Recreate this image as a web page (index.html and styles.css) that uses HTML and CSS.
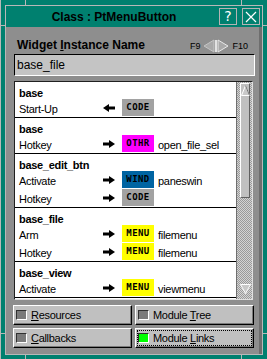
FILE: index.html
```html
<!DOCTYPE html>
<html lang="en">
<head>
  <meta charset="UTF-8">
  <title>Class : PtMenuButton</title>
  <link rel="stylesheet" href="styles.css">
</head>
<body>
  <div class="frame">
    <div class="window">
      <div class="titlebar">
        <span class="title">Class : PtMenuButton</span>
        <span class="tbtn help">?</span>
        <span class="tbtn">
          <svg width="12" height="12" viewBox="0 0 12 12"><path d="M1 1 L11 11 M11 1 L1 11" stroke="#fff" stroke-width="1.2" fill="none"/></svg>
        </span>
      </div>

      <div class="content">
        <div class="name-row">
          <span class="name-label">Widget <u>I</u>nstance Name</span>
          <span class="nav">
            <span>F9</span>
            <svg width="26" height="14" viewBox="0 0 26 14">
              <polygon points="11,1 1,7 11,13" fill="#a9a9a9" stroke="#c4c4c4"/>
              <line x1="13" y1="1" x2="13" y2="13" stroke="#fff" stroke-width="1.5"/>
              <polygon points="15,1 25,7 15,13" fill="#a9a9a9" stroke="#e8e8e8"/>
            </svg>
            <span>F10</span>
          </span>
        </div>

        <div class="field">base_file</div>

        <div class="listbox">
          <div class="items">
            <div class="group">
              <div class="gname">base</div>
              <div class="row">
                <span class="event">Start-Up</span>
                <svg class="arrow" width="12" height="8" viewBox="0 0 12 8"><polygon points="12,2.5 6,2.5 6,0 0,4 6,8 6,5.5 12,5.5"/></svg>
                <span class="badge code">CODE</span>
              </div>
            </div>
            <div class="group">
              <div class="gname">base</div>
              <div class="row">
                <span class="event">Hotkey</span>
                <svg class="arrow" width="12" height="8" viewBox="0 0 12 8"><polygon points="0,2.5 6,2.5 6,0 12,4 6,8 6,5.5 0,5.5"/></svg>
                <span class="badge othr">OTHR</span>
                <span class="target">open_file_sel</span>
              </div>
            </div>
            <div class="group">
              <div class="gname">base_edit_btn</div>
              <div class="row">
                <span class="event">Activate</span>
                <svg class="arrow" width="12" height="8" viewBox="0 0 12 8"><polygon points="0,2.5 6,2.5 6,0 12,4 6,8 6,5.5 0,5.5"/></svg>
                <span class="badge wind">WIND</span>
                <span class="target">paneswin</span>
              </div>
              <div class="row">
                <span class="event">Hotkey</span>
                <svg class="arrow" width="12" height="8" viewBox="0 0 12 8"><polygon points="0,2.5 6,2.5 6,0 12,4 6,8 6,5.5 0,5.5"/></svg>
                <span class="badge code">CODE</span>
              </div>
            </div>
            <div class="group">
              <div class="gname">base_file</div>
              <div class="row">
                <span class="event">Arm</span>
                <svg class="arrow" width="12" height="8" viewBox="0 0 12 8"><polygon points="0,2.5 6,2.5 6,0 12,4 6,8 6,5.5 0,5.5"/></svg>
                <span class="badge menu">MENU</span>
                <span class="target">filemenu</span>
              </div>
              <div class="row">
                <span class="event">Hotkey</span>
                <svg class="arrow" width="12" height="8" viewBox="0 0 12 8"><polygon points="0,2.5 6,2.5 6,0 12,4 6,8 6,5.5 0,5.5"/></svg>
                <span class="badge menu">MENU</span>
                <span class="target">filemenu</span>
              </div>
            </div>
            <div class="group">
              <div class="gname">base_view</div>
              <div class="row">
                <span class="event">Activate</span>
                <svg class="arrow" width="12" height="8" viewBox="0 0 12 8"><polygon points="0,2.5 6,2.5 6,0 12,4 6,8 6,5.5 0,5.5"/></svg>
                <span class="badge menu">MENU</span>
                <span class="target">viewmenu</span>
              </div>
            </div>
          </div>

          <div class="scrollbar">
            <div class="thumb">
              <svg width="9" height="11" viewBox="0 0 9 11"><polygon points="4.5,0.5 8.5,10.5 0.5,10.5" fill="#c8c8c8" stroke="#fff"/><line x1="4.5" y1="0.5" x2="8.5" y2="10.5" stroke="#707070"/></svg>
            </div>
            <svg class="down" width="11" height="10" viewBox="0 0 11 10"><polygon points="0.5,0.5 10.5,0.5 5.5,9.5" fill="#c8c8c8" stroke="#fff"/></svg>
          </div>
        </div>

        <div class="buttons">
          <div class="btn"><span class="ind"></span><span><u>R</u>esources</span></div>
          <div class="btn"><span class="ind"></span><span>Module <u>T</u>ree</span></div>
          <div class="btn"><span class="ind"></span><span><u>C</u>allbacks</span></div>
          <div class="btn focus"><span class="ind on"></span><span>Module <u>L</u>inks</span></div>
        </div>
      </div>
    </div>
  </div>
</body>
</html>
```

FILE: styles.css
```css
* { box-sizing: border-box; }
body {
  margin: 0;
  font-family: "Liberation Sans", Arial, sans-serif;
  color: #000;
}
.frame {
  width: 267px;
  height: 359px;
  padding: 5px 4px 4px 5px;
  background:
    linear-gradient(#b8b8b8, #b8b8b8) 0 0 / 1px 100% no-repeat,
    linear-gradient(#b8b8b8, #b8b8b8) 25px 0 / 1px 5px no-repeat,
    linear-gradient(#b8b8b8, #b8b8b8) 241px 0 / 1px 5px no-repeat,
    linear-gradient(#b8b8b8, #b8b8b8) 0 25px / 5px 1px no-repeat,
    linear-gradient(#b8b8b8, #b8b8b8) 263px 25px / 4px 1px no-repeat,
    linear-gradient(#b8b8b8, #b8b8b8) 25px 355px / 1px 4px no-repeat,
    linear-gradient(#b8b8b8, #b8b8b8) 241px 355px / 1px 4px no-repeat,
    linear-gradient(#b8b8b8, #b8b8b8) 0 333px / 5px 1px no-repeat,
    linear-gradient(#b8b8b8, #b8b8b8) 263px 333px / 4px 1px no-repeat,
    #00806f;
}
.window {
  height: 350px;
  border: 1px solid #b8b8b8;
  display: flex;
  flex-direction: column;
}

/* title bar */
.titlebar {
  height: 21px;
  display: flex;
  align-items: flex-start;
  padding-right: 2px;
  background: #00806f;
}
.title {
  flex: 1;
  text-align: center;
  padding: 1px 0 0 8px;
  line-height: 20px;
  font-size: 12px;
  font-weight: bold;
}
.tbtn {
  width: 18px;
  height: 17px;
  margin: 2px 0 0 5px;
  border: 1px solid #b4b4b4;
  display: flex;
  align-items: center;
  justify-content: center;
  color: #fff;
}
.tbtn.help {
  font-family: "DejaVu Sans", sans-serif;
  font-size: 14px;
  line-height: 15px;
}

/* main panel */
.content {
  flex: 1;
  background: #8e8e8e;
  border-right: 3px solid #6e6e6e;
  padding: 11px 4px 0 8px;
}
.name-row {
  height: 15px;
  display: flex;
  align-items: center;
  justify-content: space-between;
  padding: 0 7px 0 3px;
}
.name-label {
  font-size: 12px;
  font-weight: bold;
  line-height: 15px;
}
.nav {
  display: flex;
  align-items: center;
  gap: 3px;
  font-size: 9px;
}
.field {
  margin-top: 1px;
  height: 22px;
  background: #c4c4c4;
  border: 1px solid;
  border-color: #000 #fff #fff #000;
  padding-left: 2px;
  font-size: 12px;
  line-height: 20px;
}

/* callback list */
.listbox {
  margin-top: 5px;
  width: 239px;
  height: 219px;
  display: flex;
  border: 1px solid;
  border-color: #202020 #e0e0e0 #e0e0e0 #202020;
}
.items {
  width: 221px;
  background: #fff;
  overflow: hidden;
}
.group {
  padding-left: 4px;
  border-bottom: 1px solid #000;
}
.gname {
  padding-top: 5px;
  line-height: 12px;
  font-size: 11px;
  font-weight: bold;
  letter-spacing: -0.3px;
}
.row {
  height: 18px;
  display: flex;
  align-items: flex-start;
  font-size: 11px;
  letter-spacing: -0.3px;
}
.event {
  width: 84px;
  padding-top: 3px;
  line-height: 15px;
}
.arrow {
  margin-top: 5px;
  fill: #000;
}
.badge {
  width: 32px;
  height: 17px;
  margin-left: 7px;
  text-align: center;
  line-height: 17px;
  font-family: "DejaVu Sans Mono", monospace;
  font-size: 9px;
  font-weight: bold;
  letter-spacing: 0.4px;
}
.badge.code { background: #a2a2a2; }
.badge.othr { background: #ff00ff; }
.badge.wind { background: #0064a2; }
.badge.menu { background: #ffff00; }
.target {
  margin-left: 4px;
  padding-top: 3px;
  line-height: 15px;
}
.scrollbar {
  width: 16px;
  border-left: 1px solid #707070;
  display: flex;
  flex-direction: column;
  justify-content: space-between;
  align-items: flex-start;
  background-color: #d4d4d4;
  background-image: conic-gradient(#9a9a9a 25%, transparent 0 50%, #9a9a9a 0 75%, transparent 0);
  background-size: 2px 2px;
}
.thumb {
  width: 10px;
  height: 115px;
  margin: 1px 0 0 3px;
  background: #c0c0c0;
  border: 1px solid;
  border-color: #fff #606060 #606060 #fff;
  padding-top: 1px;
}
.thumb svg { display: block; }
.down {
  margin: 0 0 5px 3px;
}

/* bottom toggles */
.buttons {
  margin: 5px 0 0 -1px;
  width: 241px;
  display: grid;
  grid-template-columns: 1fr 1fr;
  gap: 3px;
}
.btn {
  height: 20px;
  display: flex;
  align-items: center;
  gap: 4px;
  padding-left: 2px;
  background: #c0c0c0;
  border: 1px solid;
  border-color: #fff #000 #000 #fff;
  box-shadow: inset -1px -1px #7a7a7a;
  font-size: 11px;
  letter-spacing: -0.3px;
}
.btn.focus {
  outline: 1px dotted #000;
  outline-offset: -3px;
}
.ind {
  width: 11px;
  height: 10px;
  background: #7a7a7a;
  border: 1px solid;
  border-color: #303030 #fff #fff #303030;
}
.ind.on { background: #00ff00; }
```
